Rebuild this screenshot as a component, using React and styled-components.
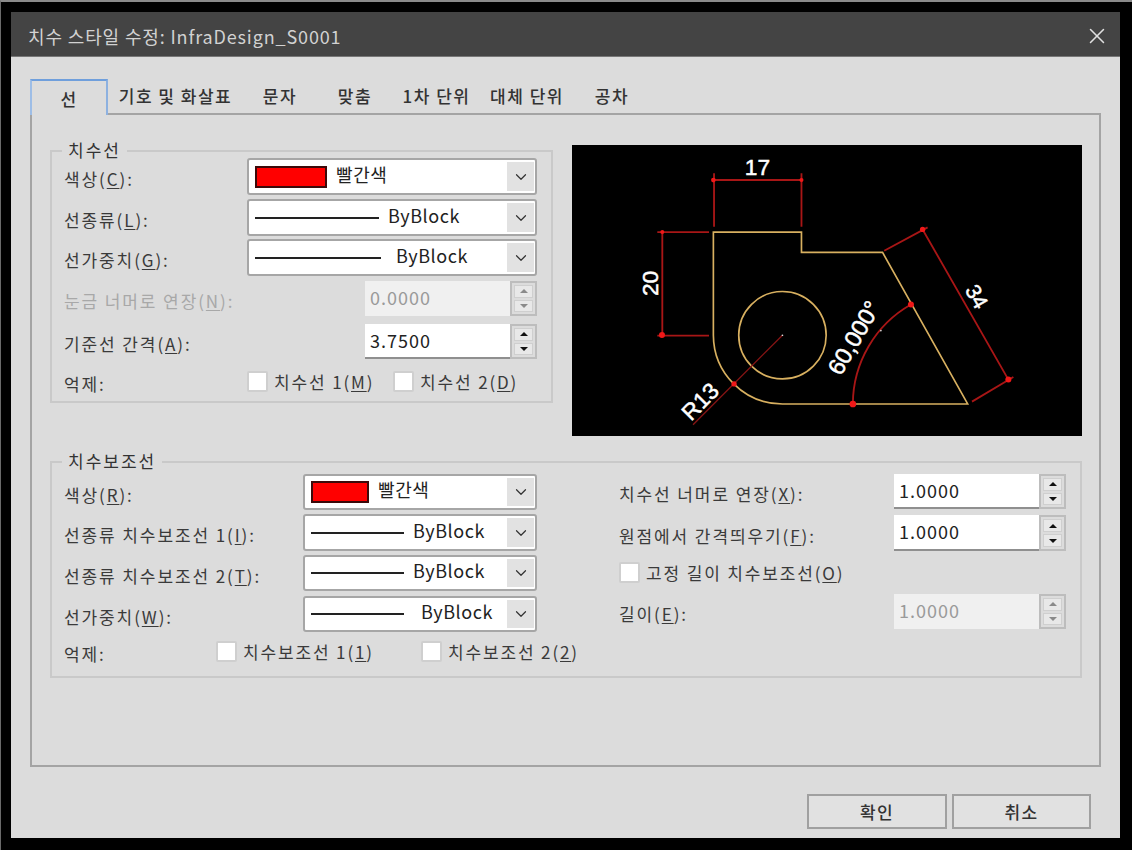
import React from "react";
import styled, { createGlobalStyle } from "styled-components";
import { ChevronDown, X } from "lucide-react";

const GlobalStyle = createGlobalStyle`
  * { box-sizing: border-box; }
  html, body { margin: 0; padding: 0; background: #000; }
  body { font-family: "Noto Sans CJK KR", "Noto Sans", sans-serif; }
  u { text-underline-offset: 2px; }
`;

const Frame = styled.div`
  width: 1132px;
  height: 850px;
  background: #000;
  border-top: 2px solid #8a8a8a;
  border-left: 1px solid #6a6a6a;
  padding: 10px 12px 12px 10px;
  display: flex;
  flex-direction: column;
`;

const TitleBar = styled.div`
  height: 45px;
  background: #444;
  border-bottom: 1px solid #777;
  padding: 3px 10px 0 17px;
  display: flex;
  align-items: center;
  justify-content: space-between;
  color: #d2d2d2;
  font-size: 18px;
  letter-spacing: 0.86px;
`;

const Body = styled.div`
  flex: 1;
  background: #dcdcdc;
  padding: 22px 19px 0;
  display: flex;
  flex-direction: column;
`;

const TabStrip = styled.div`
  display: flex;
  height: 34px;
  position: relative;
  z-index: 1;
`;

const Tab = styled.div`
  width: ${(p) => p.$w}px;
  height: ${(p) => (p.$active ? 36 : 34)}px;
  display: flex;
  align-items: center;
  justify-content: center;
  padding-bottom: ${(p) => (p.$active ? 0 : 2)}px;
  font-size: 17px;
  letter-spacing: 1.5px;
  font-weight: 500;
  color: #333;
  background: #dcdcdc;
  ${(p) =>
    p.$active &&
    `border-top: 2px solid #6f9fdc;
     border-left: 2px solid #9dbde6;
     border-right: 2px solid #8db1e0;`}
`;

const Panel = styled.div`
  height: 654px;
  border: 2px solid #a4a4a4;
  padding: 30px 18px 0;
`;

const TopRow = styled.div`
  display: flex;
  align-items: flex-start;
  gap: 19px;
`;

const Group = styled.div`
  position: relative;
  flex: none;
  width: ${(p) => p.$w}px;
  height: ${(p) => p.$h}px;
  margin-top: ${(p) => p.$mt || 0}px;
  border: 2px solid #c9c9c9;
  padding: ${(p) => p.$pt}px 14px 0 12px;
`;

const Legend = styled.span`
  position: absolute;
  top: -14px;
  left: 10px;
  padding: 0 6px;
  background: #dcdcdc;
  font-size: 17px;
  line-height: 24px;
  letter-spacing: 2px;
  color: #333;
`;

const Preview = styled.div`
  width: 510px;
  height: 291px;
  background: #000;
  flex: none;
`;

const Columns = styled.div`
  display: flex;
  gap: 40px;
`;

const Column = styled.div`
  width: ${(p) => p.$w}px;
  flex: none;
`;

const Row = styled.div`
  display: flex;
  align-items: center;
  height: ${(p) => p.$h}px;
  margin-top: ${(p) => p.$mt || 0}px;
`;

const Label = styled.div`
  width: ${(p) => p.$w}px;
  flex: none;
  padding-top: 4px;
  font-size: 17px;
  letter-spacing: 1.9px;
  white-space: nowrap;
  color: ${(p) => (p.$off ? "#a8a8a8" : "#3a3a3a")};
`;

const ComboSlot = styled.div`
  width: 234px;
  height: 100%;
  display: flex;
`;

const Combo = styled.div`
  flex: 1;
  height: 100%;
  background: #fff;
  border: 2px solid #a6a6a6;
  border-radius: 3px;
  display: flex;
  align-items: center;
  padding-left: 6px;
  font-size: 18px;
  letter-spacing: 0.6px;
  color: #222;
`;

const ComboArrow = styled.div`
  margin-left: auto;
  width: 27px;
  height: calc(100% - 4px);
  margin-right: 1px;
  background: #e2e2e2;
  color: #333;
  display: flex;
  align-items: center;
  justify-content: center;
`;

const Swatch = styled.span`
  width: ${(p) => p.$w}px;
  height: 22px;
  margin: 0 ${(p) => p.$gap}px 0 0;
  background: #f00;
  border: 2px solid #3c0a0a;
  flex: none;
`;

const LineSample = styled.span`
  width: ${(p) => p.$w}px;
  height: 2px;
  background: #222;
  margin-right: ${(p) => p.$gap}px;
  flex: none;
`;

const ComboText = styled.span`
  position: relative;
  top: -3px;
`;

const Spin = styled.div`
  flex: 1;
  height: 100%;
  display: flex;
`;

const SpinInput = styled.div`
  flex: 1;
  background: ${(p) => (p.$off ? "#f0f0f0" : "#fff")};
  border-bottom: 2px solid ${(p) => (p.$off ? "#f0f0f0" : "#8f8f8f")};
  color: ${(p) => (p.$off ? "#9a9a9a" : "#222")};
  display: flex;
  align-items: center;
  padding: 0 0 2px 5px;
  font-size: 18px;
  letter-spacing: 1px;
`;

const SpinButtons = styled.div`
  width: 27px;
  flex: none;
  border: 2px solid #bdbdbd;
  padding: 2px;
  display: flex;
  flex-direction: column;
  gap: 2px;
`;

const SpinButton = styled.div`
  flex: 1;
  background: #e8e8e8;
  border: 1px solid #cfcfcf;
  display: flex;
  align-items: center;
  justify-content: center;
  &::before {
    content: "";
    border-left: 4px solid transparent;
    border-right: 4px solid transparent;
    ${(p) => (p.$down ? "border-top" : "border-bottom")}: 4px solid ${(p) => (p.$off ? "#8a8a8a" : "#111")};
  }
`;

const Check = styled.label`
  display: flex;
  align-items: center;
  gap: 6px;
  width: ${(p) => p.$w}px;
  flex: none;
  font-size: 17px;
  letter-spacing: 1.85px;
  white-space: nowrap;
  color: #3a3a3a;
`;

const CheckBox = styled.span`
  width: 21px;
  height: 21px;
  flex: none;
  background: #fff;
  border: 2px solid #cfcfcf;
  border-radius: 2px;
`;

const Footer = styled.div`
  display: flex;
  justify-content: flex-end;
  gap: 5px;
  margin-top: 27px;
  padding-right: 10px;
`;

const Button = styled.div`
  width: ${(p) => p.$w}px;
  height: 35px;
  background: #e1e1e1;
  border: 2px solid #a0a0a0;
  display: flex;
  align-items: center;
  justify-content: center;
  font-size: 17px;
  letter-spacing: 1.4px;
  font-weight: 500;
  color: #333;
`;

const DrawText = styled.text`
  font-family: "Liberation Sans", Arial, sans-serif;
  font-size: ${(p) => p.$size || 68}px;
  fill: #fff;
  stroke: #fff;
  stroke-width: 1.5;
  text-anchor: middle;
`;

const tabs = [
  ["선", 78],
  ["기호 및 화살표", 135],
  ["문자", 74],
  ["맞춤", 76],
  ["1차 단위", 87],
  ["대체 단위", 94],
  ["공차", 76],
];

const dots = [
  [443, 120, 7],
  [707, 120, 6],
  [290, 276, 6],
  [289, 584, 9],
  [1070, 268, 8],
  [1327, 718, 9],
  [505, 731, 8],
  [861, 791, 10],
  [1035, 493, 9],
];

function DimensionDrawing() {
  return (
    <svg width="510" height="291" viewBox="22 15 1523 872" style={{ display: "block" }}>
      <g fill="none" stroke="#d8b060" strokeWidth="5">
        <path d="M443 276H707V337H950L1205 791H650A207 207 0 0 1 443 585Z" />
        <circle cx="650" cy="585" r="131" />
      </g>
      <g fill="none" stroke="#a81616" strokeWidth="5.5">
        <path d="M443 120H707M445 100V260M707 100V260" />
        <path d="M290 276V584M275 276H430M275 586H430" />
        <path d="M955 332L1085 262M1218 784L1342 710M1070 268L1327 718" />
        <path d="M861 791A344 344 0 0 1 1035 493" />
      </g>
      <path d="M382 853L650 585" stroke="#861414" strokeWidth="4" />
      {dots.map(([x, y, r]) => (
        <circle key={`${x}-${y}`} cx={x} cy={y} r={r} fill="#f01818" />
      ))}
      <circle cx="650" cy="585" r="2.5" fill="#ddd" />
      <circle cx="945" cy="571" r="2.5" fill="#ddd" />
      <DrawText x="575" y="105">17</DrawText>
      <DrawText transform="translate(277 430) rotate(-90)">20</DrawText>
      <DrawText transform="translate(1213 480) rotate(60)" $size={64}>34</DrawText>
      <DrawText transform="translate(885 605) rotate(-60)" $size={70}>60,000°</DrawText>
      <DrawText transform="translate(420 800) rotate(-45)">R13</DrawText>
    </svg>
  );
}

function ColorCombo({ swatch, gap }) {
  return (
    <Combo>
      <Swatch $w={swatch} $gap={gap} />
      <ComboText>빨간색</ComboText>
      <ComboArrow><ChevronDown size={18} strokeWidth={1.6} /></ComboArrow>
    </Combo>
  );
}

function LineCombo({ line, gap }) {
  return (
    <Combo>
      <LineSample $w={line} $gap={gap} />
      <ComboText>ByBlock</ComboText>
      <ComboArrow><ChevronDown size={18} strokeWidth={1.6} /></ComboArrow>
    </Combo>
  );
}

function SpinBox({ value, off }) {
  return (
    <Spin>
      <SpinInput $off={off}>{value}</SpinInput>
      <SpinButtons>
        <SpinButton $off={off} />
        <SpinButton $off={off} $down />
      </SpinButtons>
    </Spin>
  );
}

function CheckItem({ w, children }) {
  return (
    <Check $w={w}>
      <CheckBox />
      <span>{children}</span>
    </Check>
  );
}

export default function App() {
  return (
    <Frame>
      <GlobalStyle />
      <TitleBar>
        <span>치수 스타일 수정: InfraDesign_S0001</span>
        <X size={26} strokeWidth={1.4} color="#e0e0e0" />
      </TitleBar>
      <Body>
        <TabStrip>
          {tabs.map(([name, w], i) => (
            <Tab key={name} $w={w} $active={i === 0}>{name}</Tab>
          ))}
        </TabStrip>
        <Panel>
          <TopRow>
            <Group $w={503} $h={253} $mt={5} $pt={6}>
              <Legend>치수선</Legend>
              <Row $h={37}>
                <Label $w={183}>색상(<u>C</u>):</Label>
                <ColorCombo swatch={72} gap={9} />
              </Row>
              <Row $h={37} $mt={4}>
                <Label $w={183}>선종류(<u>L</u>):</Label>
                <LineCombo line={124} gap={9} />
              </Row>
              <Row $h={37} $mt={3}>
                <Label $w={183}>선가중치(<u>G</u>):</Label>
                <LineCombo line={126} gap={15} />
              </Row>
              <Row $h={35} $mt={5}>
                <Label $w={301} $off>눈금 너머로 연장(<u>N</u>):</Label>
                <SpinBox value="0.0000" off />
              </Row>
              <Row $h={35} $mt={8}>
                <Label $w={301}>기준선 간격(<u>A</u>):</Label>
                <SpinBox value="3.7500" />
              </Row>
              <Row $h={21} $mt={12}>
                <Label $w={183}>억제:</Label>
                <CheckItem w={146}>치수선 1(<u>M</u>)</CheckItem>
                <CheckItem>치수선 2(<u>D</u>)</CheckItem>
              </Row>
            </Group>
            <Preview><DimensionDrawing /></Preview>
          </TopRow>
          <Group $w={1032} $h={217} $mt={25} $pt={11}>
            <Legend>치수보조선</Legend>
            <Columns>
              <Column $w={515}>
                <Row $h={36}>
                  <Label $w={239}>색상(<u>R</u>):</Label>
                  <ComboSlot><ColorCombo swatch={58} gap={9} /></ComboSlot>
                </Row>
                <Row $h={37} $mt={4}>
                  <Label $w={239}>선종류 치수보조선 1(<u>I</u>):</Label>
                  <ComboSlot><LineCombo line={93} gap={9} /></ComboSlot>
                </Row>
                <Row $h={36} $mt={4}>
                  <Label $w={239}>선종류 치수보조선 2(<u>T</u>):</Label>
                  <ComboSlot><LineCombo line={93} gap={9} /></ComboSlot>
                </Row>
                <Row $h={36} $mt={5}>
                  <Label $w={239}>선가중치(<u>W</u>):</Label>
                  <ComboSlot><LineCombo line={93} gap={17} /></ComboSlot>
                </Row>
                <Row $h={22} $mt={8}>
                  <Label $w={152}>억제:</Label>
                  <CheckItem w={205}>치수보조선 1(<u>1</u>)</CheckItem>
                  <CheckItem>치수보조선 2(<u>2</u>)</CheckItem>
                </Row>
              </Column>
              <Column $w={447}>
                <Row $h={35}>
                  <Label $w={275}>치수선 너머로 연장(<u>X</u>):</Label>
                  <SpinBox value="1.0000" />
                </Row>
                <Row $h={36} $mt={6}>
                  <Label $w={275}>원점에서 간격띄우기(<u>F</u>):</Label>
                  <SpinBox value="1.0000" />
                </Row>
                <Row $h={21} $mt={11}>
                  <CheckItem>고정 길이 치수보조선(<u>O</u>)</CheckItem>
                </Row>
                <Row $h={35} $mt={11}>
                  <Label $w={275}>길이(<u>E</u>):</Label>
                  <SpinBox value="1.0000" off />
                </Row>
              </Column>
            </Columns>
          </Group>
        </Panel>
        <Footer>
          <Button $w={140}>확인</Button>
          <Button $w={139}>취소</Button>
        </Footer>
      </Body>
    </Frame>
  );
}
